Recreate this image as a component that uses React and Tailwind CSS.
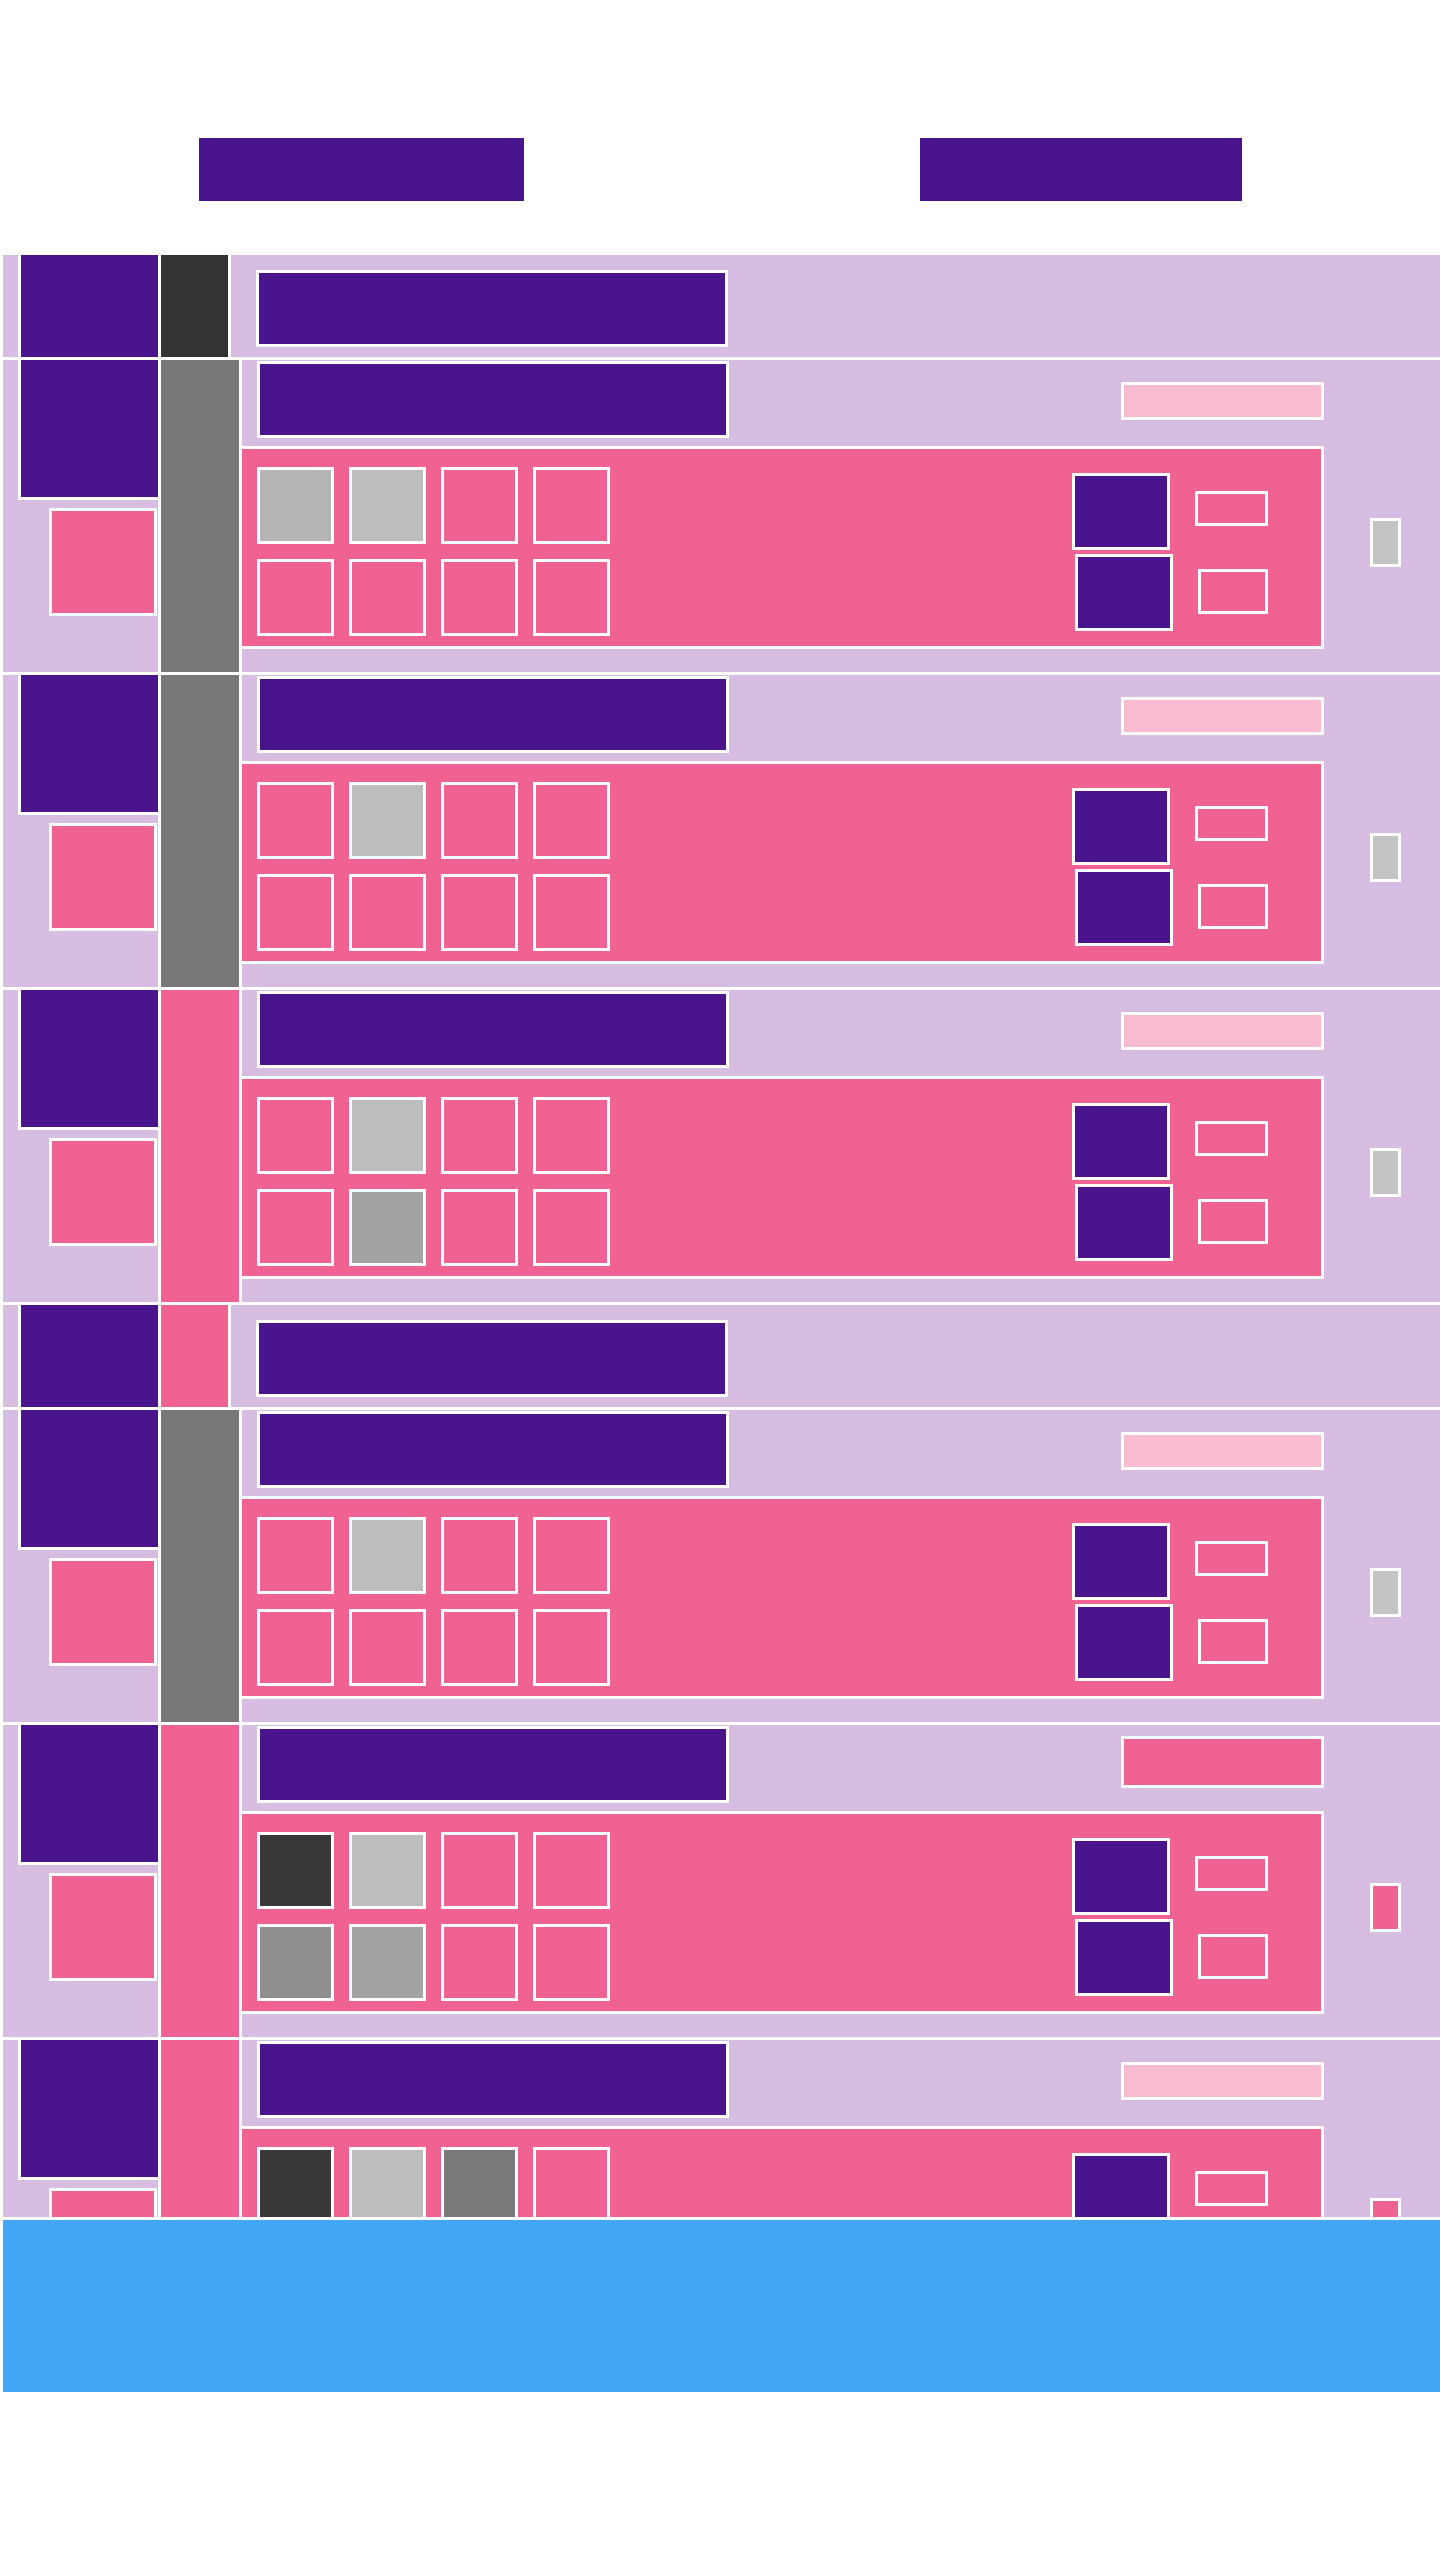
import React from "react";

const PINK = "bg-[#f06292]";

const rows = [
  { kind: "short", mid: "bg-[#333333]" },
  {
    kind: "tall", mid: "bg-[#787878]", bar: "bg-[#f8bbd0]", side: "bg-[#c4c4c4]",
    top: ["bg-[#b5b5b5]", "bg-[#bdbdbd]", PINK, PINK],
    bottom: [PINK, PINK, PINK, PINK],
  },
  {
    kind: "tall", mid: "bg-[#787878]", bar: "bg-[#f8bbd0]", side: "bg-[#c4c4c4]",
    top: [PINK, "bg-[#bdbdbd]", PINK, PINK],
    bottom: [PINK, PINK, PINK, PINK],
  },
  {
    kind: "tall", mid: PINK, bar: "bg-[#f8bbd0]", side: "bg-[#c4c4c4]",
    top: [PINK, "bg-[#bdbdbd]", PINK, PINK],
    bottom: [PINK, "bg-[#a3a3a3]", PINK, PINK],
  },
  { kind: "short", mid: PINK },
  {
    kind: "tall", mid: "bg-[#787878]", bar: "bg-[#f8bbd0]", side: "bg-[#c4c4c4]",
    top: [PINK, "bg-[#bdbdbd]", PINK, PINK],
    bottom: [PINK, PINK, PINK, PINK],
  },
  {
    // this one has the taller, solid pink bar
    kind: "tall", mid: PINK, bar: PINK, side: PINK, bigBar: true,
    top: ["bg-[#383838]", "bg-[#bdbdbd]", PINK, PINK],
    bottom: ["bg-[#8f8f8f]", "bg-[#a3a3a3]", PINK, PINK],
  },
  {
    kind: "tall", mid: PINK, bar: "bg-[#f8bbd0]", side: PINK,
    top: ["bg-[#383838]", "bg-[#bdbdbd]", "bg-[#7a7a7a]", PINK],
    bottom: [PINK, PINK, PINK, PINK],
  },
];

function ShortRow({ row }) {
  return (
    <div className="flex h-[102px] shrink-0 gap-[3px]">
      <div className="w-[155px] shrink-0 bg-[#d8bde2] pl-[15px]">
        <div className="h-full w-[140px] border-l-[3px] border-white bg-[#4a148c]" />
      </div>
      <div className={`w-[67px] shrink-0 ${row.mid}`} />
      <div className="flex-1 bg-[#d8bde2] pl-[25px] pt-[15px]">
        <div className="h-[77px] w-[472px] border-[3px] border-white bg-[#4a148c]" />
      </div>
    </div>
  );
}

function TallRow({ row }) {
  const barSize = row.bigBar ? "mt-[11px] h-[52px]" : "mt-[22px] h-[38px]";
  return (
    <div className="flex h-[312px] shrink-0 gap-[3px]">
      <div className="w-[155px] shrink-0 bg-[#d8bde2]">
        <div className="ml-[15px] h-[140px] w-[140px] border-b-[3px] border-l-[3px] border-white bg-[#4a148c]" />
        <div className="ml-[46px] mt-[8px] h-[108px] w-[108px] border-[3px] border-white bg-[#f06292]" />
      </div>
      <div className={`w-[78px] shrink-0 ${row.mid}`} />
      <div className="flex flex-1 flex-col bg-[#d8bde2]">
        <div className="flex h-[86px] w-[1082px] items-start justify-between">
          <div className="ml-[15px] mt-[1px] h-[77px] w-[472px] border-[3px] border-white bg-[#4a148c]" />
          <div className={`${barSize} w-[203px] border-[3px] border-white ${row.bar}`} />
        </div>
        <div className="flex">
          <div className="flex h-[203px] w-[1082px] border-b-[3px] border-r-[3px] border-t-[3px] border-white bg-[#f06292]">
            <div className="ml-[15px] mt-[18px] grid h-fit grid-cols-4 gap-[15px]">
              {[...row.top, ...row.bottom].map((c, i) => (
                <div key={i} className={`h-[77px] w-[77px] border-[3px] border-white ${c}`} />
              ))}
            </div>
            <div className="ml-auto mr-[53px] mt-[24px] flex flex-col gap-[4px]">
              <div className="flex items-start gap-[25px]">
                <div className="h-[77px] w-[98px] border-[3px] border-white bg-[#4a148c]" />
                <div className="mt-[18px] h-[35px] w-[73px] border-[3px] border-white bg-[#f06292]" />
              </div>
              <div className="ml-[3px] flex items-start gap-[25px]">
                <div className="h-[77px] w-[98px] border-[3px] border-white bg-[#4a148c]" />
                <div className="mt-[15px] h-[45px] w-[70px] border-[3px] border-white bg-[#f06292]" />
              </div>
            </div>
          </div>
          <div className="flex-1 pl-[46px] pt-[72px]">
            <div className={`h-[49px] w-[31px] border-[3px] border-white ${row.side}`} />
          </div>
        </div>
      </div>
    </div>
  );
}

export default function App() {
  return (
    <div className="min-h-[2560px] w-[1440px] bg-white">
      <header className="flex h-[252px] pt-[138px]">
        <div className="flex flex-1 justify-center">
          <div className="ml-[2px] h-[63px] w-[325px] bg-[#4a148c]" />
        </div>
        <div className="flex flex-1 justify-center">
          <div className="ml-[2px] h-[63px] w-[322px] bg-[#4a148c]" />
        </div>
      </header>

      <main className="flex h-[1965px] flex-col gap-[3px] overflow-hidden bg-white pl-[3px] pt-[3px]">
        {rows.map((row, i) =>
          row.kind === "short" ? <ShortRow key={i} row={row} /> : <TallRow key={i} row={row} />
        )}
      </main>

      <footer className="ml-[3px] mt-[3px] h-[172px] bg-[#42a5f5]" />
    </div>
  );
}
